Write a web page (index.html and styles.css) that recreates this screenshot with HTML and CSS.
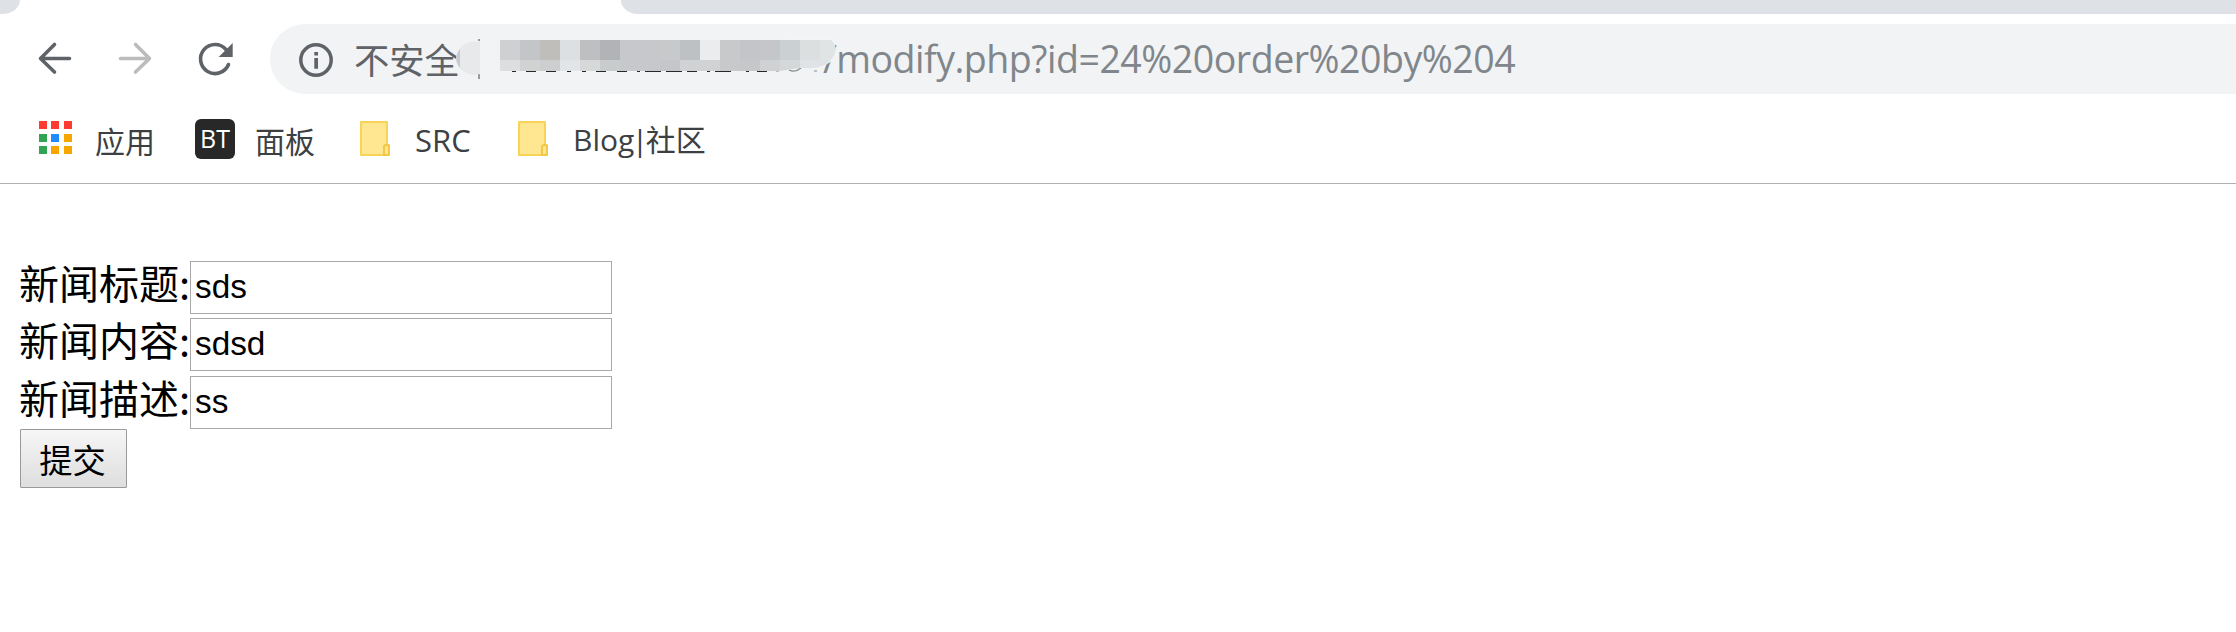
FILE: index.html
```html
<!DOCTYPE html>
<html lang="zh-CN">
<head>
<meta charset="utf-8">
<title>modify.php</title>
<link rel="stylesheet" href="styles.css">
</head>
<body>
<header class="browser">
  <div class="tabs"><span class="tab-left"></span><span class="tab-right"></span></div>
  <div class="toolbar">
    <svg class="nav-icons" width="270" height="70" viewBox="0 24 270 70" fill="none" stroke-width="3.6" stroke-linecap="round" stroke-linejoin="round">
      <path d="M69.5 58.5H41M54.5 44.5L40.5 58.5L54.5 72" stroke="#5f6368"/>
      <path d="M120.500 58.500H149M135.500 44.500L149.500 58.500L135.500 72" stroke="#babcbe"/>
      <path d="M228.500 64.500A14.500 14.500 0 1 1 226 49.500" stroke="#5f6368"/>
      <path d="M232.700 43V57H218.700Z" fill="#5f6368"/>
    </svg>
    <div class="omnibox">
      <svg class="info" width="34" height="34" viewBox="0 0 34 34">
        <circle cx="17" cy="17" r="15.200" fill="none" stroke="#5f6368" stroke-width="3.500"/>
        <path d="M15.300 9h3.700v3.500h-3.700zM15.300 15h3.700v10.700h-3.700z" fill="#5f6368"/>
      </svg>
      <span class="security">不安全</span>
      <span class="url">/modify.php?id=24%20order%20by%204</span>
      <svg class="mosaic" width="384" height="50" viewBox="454 33 384 50">
        <path d="M479 39V41M479 74V79" stroke="#97999c" stroke-width="2"/>
        <path d="M475 41.500C464 42 456 50 456 58.500S464 74.500 475 75L480 74V41.500Z" fill="#e8e9eb"/>
        <path d="M460 49C455 55 455 62 460 68Z" fill="#c9cacd"/>
        <path d="M480 40H500V73H480Z" fill="#f2f3f5"/>
        <path d="M780 40Q818 28 836 41L832 61L822 67H780Z" fill="#f3f4f5"/>
        <g fill="none" stroke="#26282b" stroke-width="1.200">
          <path d="M512 71.500h4M526 71.500h10M546 71.500h10M567 71.500h4M582 71.500h4M596 71.500h10M617 71.500h10M637 71.500h3M645 71.500h16M666 71.500h16M687 71.500h10M707 71.500h3M715 71.500h16M746 71.500h3M757 71.500h10"/>
          <path d="M776 71h3M789 70Q795 73 801 68M814 71h3" stroke="#868b90"/>
        </g>
        <g shape-rendering="crispEdges">
          <path d="M500 40h20v20h-20z" fill="#cfd0d2"/><path d="M520 40h20v20h-20z" fill="#c4c5c8"/>
          <path d="M540 40h20v20h-20z" fill="#bfbebb"/><path d="M560 40h20v20h-20z" fill="#dde0e3"/>
          <path d="M580 40h20v20h-20z" fill="#bdbfc1"/><path d="M600 40h20v20h-20z" fill="#b2b3b6"/>
          <path d="M620 40h40v20h-40z" fill="#c7c8cb"/><path d="M660 40h20v20h-20z" fill="#c8c9ca"/>
          <path d="M680 40h20v20h-20z" fill="#bdc1c4"/><path d="M700 40h20v20h-20z" fill="#ebecee"/>
          <path d="M720 40h20v20h-20z" fill="#c8c9cb"/><path d="M740 40h20v20h-20z" fill="#c4c5c8"/>
          <path d="M760 40h20v20h-20z" fill="#c5c6c9"/><path d="M780 40h20v20h-20z" fill="#cbd0d2"/>
          <path d="M800 40h20v20h-20z" fill="#dbdfe0"/>
          <path d="M500 60h20v11h-20z" fill="#dddee0"/><path d="M520 60h20v11h-20z" fill="#d1d3d2"/>
          <path d="M540 60h20v11h-20z" fill="#ccced0"/><path d="M560 60h20v11h-20z" fill="#e1e5e8"/>
          <path d="M580 60h20v11h-20z" fill="#d6d9d8"/><path d="M600 60h20v11h-20z" fill="#c8cccd"/>
          <path d="M620 60h40v11h-40z" fill="#c7c8cb"/>
          <path d="M660 60h20v11h-20z" fill="#c5c6c9"/><path d="M680 60h40v11h-40z" fill="#d0d2d4"/>
          <path d="M720 60h20v11h-20z" fill="#c8c9ca"/><path d="M740 60h20v11h-20z" fill="#c5c7c9"/>
          <path d="M760 60h20v11h-20z" fill="#cfd1d3"/>
        </g>
        <path d="M780 60H800V68L780 71Z" fill="#d4d8d9"/>
        <path d="M800 60H831Q823 68 812 68H800Z" fill="#e0e3e5"/>
        <path d="M820 40H831Q837 45 835 53L831 60H820Z" fill="#e1e4e5"/>
      </svg>
    </div>
  </div>
  <nav class="bookmarks">
    <svg class="apps" width="34" height="34" viewBox="0 0 34 34" shape-rendering="crispEdges">
      <path d="M1 0h8v8H1zM13 0h8v8h-8zM26 0h8v8h-8z" fill="#ff3b30"/>
      <path d="M1 13h8v8H1zM1 25h8v8H1z" fill="#31a354"/>
      <path d="M13 13h8v8h-8z" fill="#1e8cff"/>
      <path d="M26 13h8v8h-8zM13 25h8v8h-8zM26 25h8v8h-8z" fill="#f7a600"/>
    </svg>
    <span class="label apps-label">应用</span>
    <span class="bt">BT</span>
    <span class="label panel-label">面板</span>
    <svg class="folder" width="31" height="36" viewBox="0 0 31 36"><path d="M1 1H27V24H29V34H1Z" fill="#ffe691" stroke="#f8d456" stroke-width="2" stroke-linejoin="round"/><path d="M24 34V25.500Q24 24 26.500 24T29 25.500V32.500Q29 34 27 34Z" fill="#ffe691" stroke="#f1c843" stroke-width="2"/></svg>
    <span class="label latin src-label">SRC</span>
    <svg class="folder" width="31" height="36" viewBox="0 0 31 36"><path d="M1 1H27V24H29V34H1Z" fill="#ffe691" stroke="#f8d456" stroke-width="2" stroke-linejoin="round"/><path d="M24 34V25.500Q24 24 26.500 24T29 25.500V32.500Q29 34 27 34Z" fill="#ffe691" stroke="#f1c843" stroke-width="2"/></svg>
    <span class="label latin blog-label">Blog<span class="bar">|</span>社区</span>
  </nav>
</header>
<form class="news-form">
  <label class="row"><span class="name">新闻标题:</span><input class="field" type="text" value="sds"></label>
  <label class="row middle"><span class="name">新闻内容:</span><input class="field" type="text" value="sdsd"></label>
  <label class="row"><span class="name">新闻描述:</span><input class="field" type="text" value="ss"></label>
  <button class="submit" type="button">提交</button>
</form>
</body>
</html>
```
FILE: styles.css
```css
* { box-sizing: border-box; }
body { margin: 0; background: #fff; overflow: hidden; font-family: "Open Sans", "Noto Sans CJK SC", sans-serif; }
.browser { height: 184px; border-bottom: 1px solid #b0b0b0; }
.tabs { height: 14px; display: flex; justify-content: space-between; }
.tab-left { width: 20px; background: #dee1e6; border-bottom-right-radius: 18px 14px; }
.tab-right { width: 1615px; background: #dee1e6; border-bottom-left-radius: 17px 14px; }
.toolbar { height: 90px; padding-top: 10px; display: flex; }
.nav-icons { flex: none; }
.omnibox { position: relative; flex: 1; height: 70px; background: #f1f3f4; border-radius: 35px 0 0 35px; display: flex; align-items: center; padding-left: 29px; white-space: nowrap; }
.info { flex: none; margin-top: 2px; }
.security { width: 107px; margin-left: 21px; font: 35.300px/50px "Noto Sans CJK SC", sans-serif; color: #5f6368; }
.url { margin-left: 362px; font-size: 37.500px; line-height: 50px; letter-spacing: -0.480px; color: #80868b; }
.mosaic { position: absolute; left: 184px; top: 9px; }
.bookmarks { height: 79px; display: flex; align-items: flex-start; padding: 15px 0 0 38px; color: #3c4043; }
.apps { margin-top: 2px; }
.label { font: 30px/42px "Noto Sans CJK SC", sans-serif; white-space: nowrap; }
.label.latin { font-family: "Open Sans", "Noto Sans CJK SC", sans-serif; }
.apps-label { width: 100px; margin-left: 23px; }
.bt { width: 40px; height: 40px; border-radius: 6px; background: #282828; color: #fff; font: 25px/38px "Open Sans", sans-serif; text-align: center; }
.panel-label { width: 105px; margin-left: 20px; }
.folder { margin-top: 2px; }
.label.src-label { width: 103px; margin-left: 24px; font-size: 31px; }
.blog-label { margin-left: 24px; }
.bar { margin: 0 -2.500px; }
.news-form { padding: 77px 0 0 20px; display: flex; flex-direction: column; align-items: flex-start; }
.row { display: flex; height: 53px; }
.row.middle { margin: 4px 0 5px; }
.name { width: 171px; margin-left: -1px; font: 40px/43px "Noto Sans CJK SC", sans-serif; white-space: nowrap; color: #000; }
.field { width: 422px; height: 53px; margin: 0; padding: 0 4px 2px; border: 1px solid #a9a9a9; border-radius: 0; background: #fff; color: #000; font: 33.300px "Liberation Sans", Arial, sans-serif; }
.submit { width: 107px; height: 59px; margin: 0; padding: 0 2px 0 0; border: 1px solid #999; border-radius: 1px; background: linear-gradient(#f6f6f6, #dedede); color: #000; font: 33.300px/54px "Noto Sans CJK SC", sans-serif; }
```
